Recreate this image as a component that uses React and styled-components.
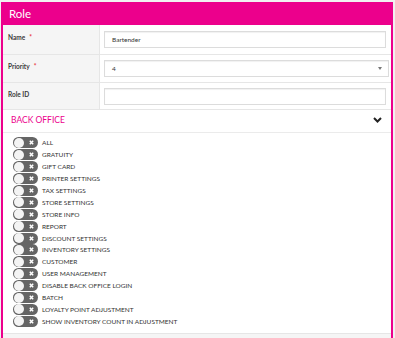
import React from 'react';
import styled, { createGlobalStyle } from 'styled-components';

const PINK = '#ec008c';

const GlobalStyle = createGlobalStyle`
  body {
    margin: 0;
    background: #f1f1f1;
    font-family: Lato, "Open Sans", sans-serif;
  }
`;

const Page = styled.div`
  padding: 2px 2px 0 1px;
  height: 336px;
  overflow: hidden;
`;

const Panel = styled.div`
  border: 2px solid ${PINK};
  border-top: none;
  border-bottom: none;
  background: #fff;
  height: 336px;
  display: flex;
  flex-direction: column;
`;

const Header = styled.div`
  background: ${PINK};
  height: 23px;
  margin: 0 -2px;
  padding: 0 8px;
  display: flex;
  align-items: center;
  color: #fff;
  font-size: 11.5px;
`;

const FormRow = styled.div`
  display: grid;
  grid-template-columns: 97px 1fr;
  border-bottom: 1px solid #e6e6e6;
  height: ${(p) => p.h}px;
`;

const Label = styled.div`
  background: #f5f5f5;
  border-right: 1px solid #e6e6e6;
  padding: 0 5px;
  padding-top: ${(p) => p.top}px;
  font-size: 6.5px;
  font-weight: bold;
  color: #3a3a3a;
`;

const Star = styled.span`
  color: #e8353b;
  margin-left: 4px;
`;

const Cell = styled.div`
  display: flex;
  align-items: center;
  padding: 0 ${(p) => p.right}px 0 4px;
`;

const Input = styled.div`
  flex: 1;
  height: 17px;
  border: 1px solid #dcdcdc;
  box-shadow: inset 0 1px 1px rgba(0, 0, 0, 0.06);
  box-sizing: border-box;
  display: flex;
  align-items: center;
  justify-content: space-between;
  padding: 0 6px 0 7px;
  font-size: 6.5px;
  color: #333;
`;

const Caret = styled.span`
  width: 0;
  height: 0;
  border-left: 2.5px solid transparent;
  border-right: 2.5px solid transparent;
  border-top: 3px solid #777;
`;

const SectionHead = styled.div`
  height: 20px;
  border-bottom: 1px solid #ebebeb;
  display: flex;
  align-items: center;
  justify-content: space-between;
  padding: 0 9px 2px 8px;
  color: ${PINK};
  font-size: 8.5px;
`;

const List = styled.div`
  flex: 1;
  padding: 4px 0 0 10px;
`;

const Item = styled.div`
  display: flex;
  align-items: center;
  height: 11.9px;
  gap: 4px;
  font-size: 6.5px;
  color: #333;
`;

const Toggle = styled.span`
  position: relative;
  width: 25px;
  height: 11px;
  border-radius: 5.5px;
  background: #656565;
  flex-shrink: 0;
`;

const Knob = styled.span`
  position: absolute;
  left: 1px;
  top: 0.5px;
  width: 10px;
  height: 10px;
  border-radius: 50%;
  background: #f4f4f4;
`;

const Cross = styled.svg`
  position: absolute;
  right: 4px;
  top: 3px;
`;

const Footer = styled.div`
  height: 4px;
  background: #f5f5f5;
  border-top: 1px solid #e6e6e6;
`;

const perms = [
  'ALL',
  'GRATUITY',
  'GIFT CARD',
  'PRINTER SETTINGS',
  'TAX SETTINGS',
  'STORE SETTINGS',
  'STORE INFO',
  'REPORT',
  'DISCOUNT SETTINGS',
  'INVENTORY SETTINGS',
  'CUSTOMER',
  'USER MANAGEMENT',
  'DISABLE BACK OFFICE LOGIN',
  'BATCH',
  'LOYALTY POINT ADJUSTMENT',
  'SHOW INVENTORY COUNT IN ADJUSTMENT',
];

export default function App() {
  return (
    <Page>
      <GlobalStyle />
      <Panel>
        <Header>Role</Header>
        <FormRow h={29}>
          <Label top={9}>Name<Star>*</Star></Label>
          <Cell right={5}><Input>Bartender</Input></Cell>
        </FormRow>
        <FormRow h={27}>
          <Label top={8}>Priority<Star>*</Star></Label>
          <Cell right={2}><Input>4<Caret /></Input></Cell>
        </FormRow>
        <FormRow h={26}>
          <Label top={8}>Role ID</Label>
          <Cell right={5}><Input /></Cell>
        </FormRow>
        <SectionHead>
          BACK OFFICE
          <svg width="9" height="6" viewBox="0 0 9 6">
            <path d="M1 1 L4.5 4.5 L8 1" fill="none" stroke="#222" strokeWidth="2" />
          </svg>
        </SectionHead>
        <List>
          {perms.map((p) => (
            <Item key={p}>
              <Toggle>
                <Knob />
                <Cross width="5" height="5" viewBox="0 0 5 5">
                  <path d="M0.8 0.8 L4.2 4.2 M4.2 0.8 L0.8 4.2" stroke="#fff" strokeWidth="1.5" />
                </Cross>
              </Toggle>
              {p}
            </Item>
          ))}
        </List>
        <Footer />
      </Panel>
    </Page>
  );
}
